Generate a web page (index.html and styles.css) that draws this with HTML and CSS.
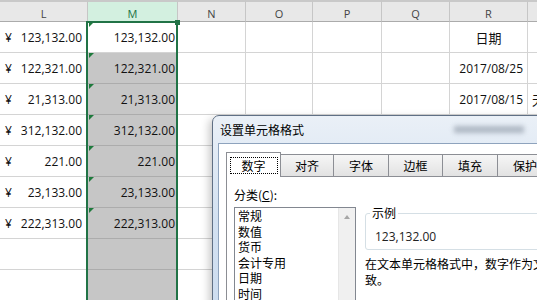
FILE: index.html
```html
<!DOCTYPE html>
<html lang="zh">
<head>
<meta charset="utf-8">
<title>设置单元格格式</title>
<link rel="stylesheet" href="styles.css">
</head>
<body>
<div class="sheet">
  <div class="c h">L</div>
  <div class="c h hm">M</div>
  <div class="c h">N</div>
  <div class="c h">O</div>
  <div class="c h">P</div>
  <div class="c h">Q</div>
  <div class="c h">R</div>
  <div class="c h"></div>

  <div class="c l"><span>¥</span><span>123,132.00</span></div>
  <div class="c m act err">123,132.00</div>
  <div class="c"></div><div class="c"></div><div class="c"></div><div class="c"></div>
  <div class="c r cjk">日期</div>
  <div class="c"></div>

  <div class="c l"><span>¥</span><span>122,321.00</span></div>
  <div class="c m sel err">122,321.00</div>
  <div class="c"></div><div class="c"></div><div class="c"></div><div class="c"></div>
  <div class="c r rt">2017/08/25</div>
  <div class="c"></div>

  <div class="c l"><span>¥</span><span>21,313.00</span></div>
  <div class="c m sel err">21,313.00</div>
  <div class="c"></div><div class="c"></div><div class="c"></div><div class="c"></div>
  <div class="c r rt">2017/08/15</div>
  <div class="c s cjk">天</div>

  <div class="c l"><span>¥</span><span>312,132.00</span></div>
  <div class="c m sel err">312,132.00</div>
  <div class="c"></div><div class="c"></div><div class="c"></div><div class="c"></div><div class="c"></div><div class="c"></div>

  <div class="c l"><span>¥</span><span>221.00</span></div>
  <div class="c m sel err">221.00</div>
  <div class="c"></div><div class="c"></div><div class="c"></div><div class="c"></div><div class="c"></div><div class="c"></div>

  <div class="c l"><span>¥</span><span>23,133.00</span></div>
  <div class="c m sel err">23,133.00</div>
  <div class="c"></div><div class="c"></div><div class="c"></div><div class="c"></div><div class="c"></div><div class="c"></div>

  <div class="c l"><span>¥</span><span>222,313.00</span></div>
  <div class="c m sel err">222,313.00</div>
  <div class="c"></div><div class="c"></div><div class="c"></div><div class="c"></div><div class="c"></div><div class="c"></div>

  <div class="c l"></div>
  <div class="c m sel"></div>
  <div class="c"></div><div class="c"></div><div class="c"></div><div class="c"></div><div class="c"></div><div class="c"></div>

  <div class="c l"></div>
  <div class="c m sel"></div>
  <div class="c"></div><div class="c"></div><div class="c"></div><div class="c"></div><div class="c"></div><div class="c"></div>
</div>

<div class="selection"></div>
<div class="handle"></div>

<div class="dialog">
  <div class="titlebar">
    <span class="title">设置单元格格式</span>
    <span class="blur"></span>
  </div>
  <div class="dbody">
    <div class="tabs">
      <div class="tab active"><span class="focus">数字</span></div>
      <div class="tab">对齐</div>
      <div class="tab">字体</div>
      <div class="tab">边框</div>
      <div class="tab">填充</div>
      <div class="tab">保护</div>
    </div>
    <div class="panel">
      <div class="leftcol">
        <div class="label">分类(<u>C</u>):</div>
        <div class="listbox">
          <div class="item">常规</div>
          <div class="item">数值</div>
          <div class="item">货币</div>
          <div class="item">会计专用</div>
          <div class="item">日期</div>
          <div class="item">时间</div>
          <div class="scrollbar"><span class="arrow"></span></div>
        </div>
      </div>
      <div class="rightcol">
        <fieldset class="sample">
          <legend>示例</legend>
          <div class="sample-val">123,132.00</div>
        </fieldset>
        <div class="desc">在文本单元格格式中，数字作为文本处理，单元格显示的内容与输入的内容完全一<br>致。</div>
      </div>
    </div>
  </div>
</div>
</body>
</html>
```
FILE: styles.css
```css
html, body {
  margin: 0;
  padding: 0;
}
body {
  width: 537px;
  height: 300px;
  overflow: hidden;
  position: relative;
  background: #fff;
  font-family: "Open Sans", "Noto Sans CJK SC", sans-serif;
  color: #111;
}

.sheet {
  display: grid;
  grid-template-columns: 88px 90px 68px 67px 69px 68px 78px 40px;
  grid-template-rows: 22px;
  grid-auto-rows: 31px;
  font-size: 12px;
}

.c {
  box-sizing: border-box;
  border-right: 1px solid #d4d4d4;
  border-bottom: 1px solid #d4d4d4;
  display: flex;
  align-items: center;
  white-space: nowrap;
  overflow: hidden;
  position: relative;
}

.h {
  background: #e8e8e8;
  border-top: 2px solid #c9c9c9;
  border-right: 1px solid #c6c6c6;
  border-bottom: 1px solid #ababab;
  justify-content: center;
  padding-top: 3px;
  font-size: 11px;
  color: #444;
}
.hm {
  background: #d3f0e0;
  color: #217346;
}

.l {
  justify-content: space-between;
  padding: 0 5px 0 5px;
}

.m {
  justify-content: flex-end;
  padding-right: 2px;
}
.sel {
  background: #c6c6c6;
  border-bottom-color: #acacac;
}
.err::before {
  content: "";
  position: absolute;
  left: 1px;
  top: 0;
  border-top: 5px solid #1e7a3c;
  border-right: 5px solid transparent;
}

.r {
  justify-content: center;
}
.rt {
  justify-content: flex-end;
  padding-right: 4px;
}
.cjk {
  font-family: "Noto Sans CJK SC", sans-serif;
  font-size: 13px;
}
.s {
  padding-left: 4px;
}

.selection {
  position: absolute;
  left: 86px;
  top: 21px;
  width: 92px;
  height: 300px;
  box-sizing: border-box;
  border: 2px solid #217346;
}
.handle {
  position: absolute;
  left: 175px;
  top: 20px;
  width: 5px;
  height: 5px;
  background: #217346;
}

/* dialog */
.dialog {
  position: absolute;
  left: 212px;
  top: 115px;
  width: 420px;
  height: 260px;
  box-sizing: border-box;
  border: 1px solid #5f6f84;
  border-radius: 7px 7px 0 0;
  background: linear-gradient(to bottom, #eaf0f7 0%, #d3e1f1 40%, #c9daef 100%);
  box-shadow: -3px 3px 8px rgba(0, 0, 0, 0.22);
  font-family: "Noto Sans CJK SC", sans-serif;
  font-size: 12px;
  color: #000;
}

.titlebar {
  height: 27px;
  display: flex;
  align-items: center;
  padding-left: 7px;
}
.blur {
  display: block;
  margin-left: 150px;
  width: 70px;
  height: 7px;
  background: #7f8a99;
  filter: blur(2.5px);
  opacity: 0.55;
}

.dbody {
  margin: 0 5px;
  height: 240px;
  background: #fff;
  border: 1px solid #8ea3bd;
  padding-top: 8px;
}

.tabs {
  display: flex;
  align-items: flex-end;
  padding-left: 7px;
}
.tab {
  box-sizing: border-box;
  height: 22px;
  width: 55px;
  margin-left: -1px;
  border: 1px solid #8c8e94;
  border-bottom: none;
  background: linear-gradient(to bottom, #f6f6f6, #e2e2e2);
  display: flex;
  align-items: center;
  justify-content: center;
  line-height: 16px;
}
.tab:first-child {
  margin-left: 0;
}
.tab:nth-child(2) { width: 54px; }
.tab:nth-child(3) { width: 56px; }
.tab:nth-child(4) { width: 55px; }
.tab:nth-child(5) { width: 56px; }
.tab:nth-child(6) { width: 56px; }

.tab.active {
  height: 25px;
  margin-bottom: -1px;
  background: #fff;
  position: relative;
  z-index: 1;
  align-items: flex-start;
  padding-top: 4px;
}
.focus {
  display: block;
  box-sizing: border-box;
  width: 48px;
  height: 17px;
  line-height: 15px;
  border: 1px dotted #000;
  text-align: center;
}

.panel {
  margin-left: 7px;
  border-top: 1px solid #8c8e94;
  border-left: 1px solid #8c8e94;
  background: #fff;
  padding: 10px 0 0 7px;
  display: flex;
  align-items: flex-start;
  height: 200px;
}

.leftcol {
  width: 122px;
  flex: none;
}
.label {
  line-height: 16px;
}
.listbox {
  margin-top: 4px;
  height: 120px;
  border: 1px solid #828790;
  position: relative;
  padding-left: 3px;
}
.item {
  line-height: 15.6px;
}
.scrollbar {
  position: absolute;
  right: 0;
  top: 0;
  bottom: 0;
  width: 17px;
  background: #f0f0f0;
  border-left: 1px solid #e6e6e6;
  display: flex;
  justify-content: center;
  padding-top: 7px;
  box-sizing: border-box;
}
.arrow {
  width: 0;
  height: 0;
  border-left: 3px solid transparent;
  border-right: 3px solid transparent;
  border-bottom: 4px solid #a6a6a6;
}

.rightcol {
  margin-left: 9px;
  padding-top: 18px;
}
.sample {
  margin: 0;
  padding: 8px 9px 4px;
  border: 1px solid #d5dfe5;
  border-radius: 3px;
  width: 260px;
}
.sample legend {
  padding: 0 2px;
  margin-left: -5px;
  line-height: 16px;
}
.sample-val {
  font-family: "Open Sans", sans-serif;
  font-size: 12px;
  line-height: 16px;
  color: #222;
}
.desc {
  margin-top: 6px;
  line-height: 16px;
  white-space: nowrap;
}
```
